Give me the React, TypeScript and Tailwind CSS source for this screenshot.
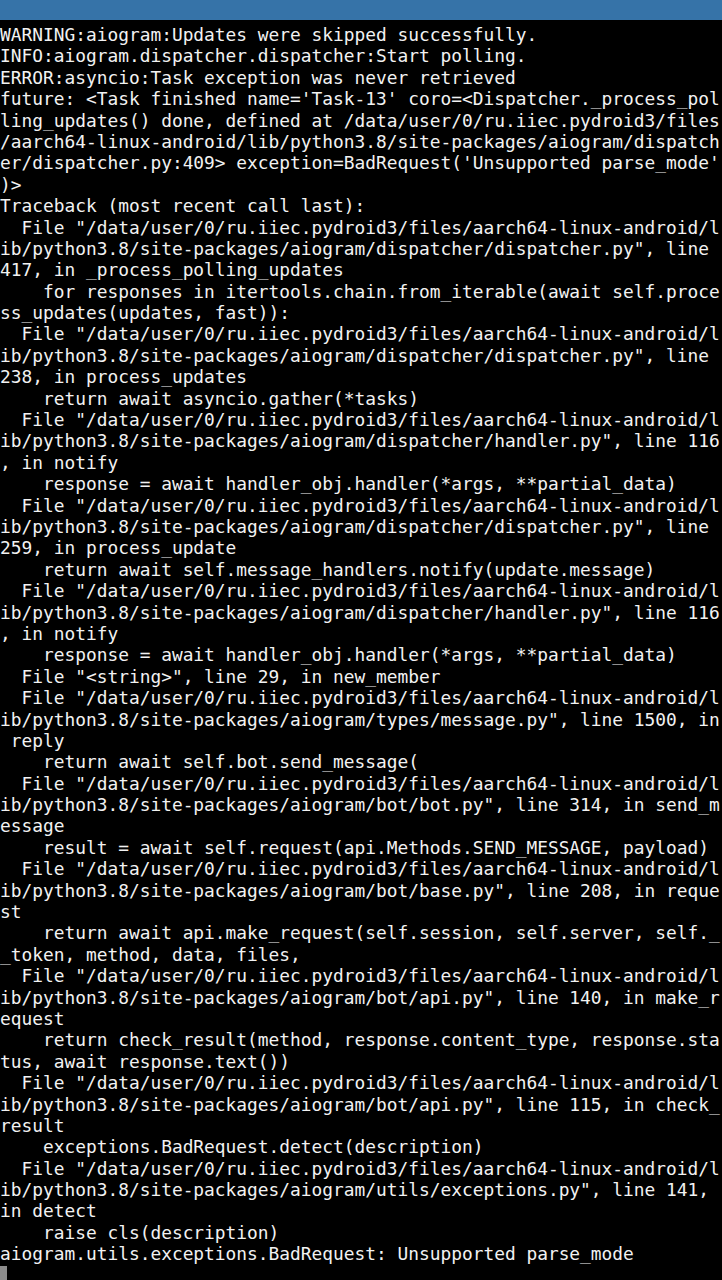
const lines = [
  "WARNING:aiogram:Updates were skipped successfully.",
  "INFO:aiogram.dispatcher.dispatcher:Start polling.",
  "ERROR:asyncio:Task exception was never retrieved",
  "future: <Task finished name='Task-13' coro=<Dispatcher._process_pol",
  "ling_updates() done, defined at /data/user/0/ru.iiec.pydroid3/files",
  "/aarch64-linux-android/lib/python3.8/site-packages/aiogram/dispatch",
  "er/dispatcher.py:409> exception=BadRequest('Unsupported parse_mode'",
  ")>",
  "Traceback (most recent call last):",
  '  File "/data/user/0/ru.iiec.pydroid3/files/aarch64-linux-android/l',
  'ib/python3.8/site-packages/aiogram/dispatcher/dispatcher.py", line',
  "417, in _process_polling_updates",
  "    for responses in itertools.chain.from_iterable(await self.proce",
  "ss_updates(updates, fast)):",
  '  File "/data/user/0/ru.iiec.pydroid3/files/aarch64-linux-android/l',
  'ib/python3.8/site-packages/aiogram/dispatcher/dispatcher.py", line',
  "238, in process_updates",
  "    return await asyncio.gather(*tasks)",
  '  File "/data/user/0/ru.iiec.pydroid3/files/aarch64-linux-android/l',
  'ib/python3.8/site-packages/aiogram/dispatcher/handler.py", line 116',
  ", in notify",
  "    response = await handler_obj.handler(*args, **partial_data)",
  '  File "/data/user/0/ru.iiec.pydroid3/files/aarch64-linux-android/l',
  'ib/python3.8/site-packages/aiogram/dispatcher/dispatcher.py", line',
  "259, in process_update",
  "    return await self.message_handlers.notify(update.message)",
  '  File "/data/user/0/ru.iiec.pydroid3/files/aarch64-linux-android/l',
  'ib/python3.8/site-packages/aiogram/dispatcher/handler.py", line 116',
  ", in notify",
  "    response = await handler_obj.handler(*args, **partial_data)",
  '  File "<string>", line 29, in new_member',
  '  File "/data/user/0/ru.iiec.pydroid3/files/aarch64-linux-android/l',
  'ib/python3.8/site-packages/aiogram/types/message.py", line 1500, in',
  " reply",
  "    return await self.bot.send_message(",
  '  File "/data/user/0/ru.iiec.pydroid3/files/aarch64-linux-android/l',
  'ib/python3.8/site-packages/aiogram/bot/bot.py", line 314, in send_m',
  "essage",
  "    result = await self.request(api.Methods.SEND_MESSAGE, payload)",
  '  File "/data/user/0/ru.iiec.pydroid3/files/aarch64-linux-android/l',
  'ib/python3.8/site-packages/aiogram/bot/base.py", line 208, in reque',
  "st",
  "    return await api.make_request(self.session, self.server, self._",
  "_token, method, data, files,",
  '  File "/data/user/0/ru.iiec.pydroid3/files/aarch64-linux-android/l',
  'ib/python3.8/site-packages/aiogram/bot/api.py", line 140, in make_r',
  "equest",
  "    return check_result(method, response.content_type, response.sta",
  "tus, await response.text())",
  '  File "/data/user/0/ru.iiec.pydroid3/files/aarch64-linux-android/l',
  'ib/python3.8/site-packages/aiogram/bot/api.py", line 115, in check_',
  "result",
  "    exceptions.BadRequest.detect(description)",
  '  File "/data/user/0/ru.iiec.pydroid3/files/aarch64-linux-android/l',
  'ib/python3.8/site-packages/aiogram/utils/exceptions.py", line 141,',
  "in detect",
  "    raise cls(description)",
  "aiogram.utils.exceptions.BadRequest: Unsupported parse_mode",
];

export default function App() {
  return (
    <div className="h-[1280px] w-[722px] overflow-hidden bg-black flex flex-col">
      <div className="h-[20px] shrink-0 bg-[#3673a8]" />
      <div className="pt-[4px] font-['DejaVu_Sans_Mono','Liberation_Mono',monospace] text-[17.85px] leading-[21.4px] text-[#f2f2f2] whitespace-pre">
        {lines.map((line, i) => (
          <div key={i} className="h-[21.4px]">
            {line}
          </div>
        ))}
        <div className="h-[21.4px] flex items-start pt-[1px]">
          <span className="block w-[7px] h-[20px] bg-[#8c8c8c]" />
        </div>
      </div>
    </div>
  );
}
